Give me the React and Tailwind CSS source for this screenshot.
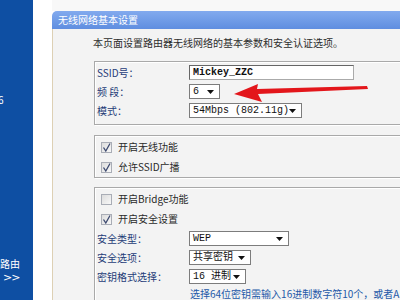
import React from "react";

const cjk = { fontFamily: '"Noto Sans CJK SC", "Liberation Sans", sans-serif' };
const mono = { fontFamily: '"Liberation Mono", "Noto Sans CJK SC", monospace' };

function Tri() {
  return (
    <svg width="7" height="4" viewBox="0 0 7 4" className="shrink-0">
      <path d="M0 0 L7 0 L3.5 4 Z" fill="#111" />
    </svg>
  );
}

function Select({ width, children }) {
  return (
    <div
      className="h-[15px] border border-[#7c7c7c] bg-white flex items-center justify-between pl-[3px] pr-[5px] text-[10px] leading-none text-[#111] shrink-0"
      style={{ ...mono, width }}
    >
      <span className="whitespace-nowrap">{children}</span>
      <Tri />
    </div>
  );
}

function Check({ checked, label }) {
  return (
    <div className="h-[20px] flex items-center pl-[6px]">
      <div className="w-[11px] h-[11px] border border-[#a9adb6] bg-gradient-to-br from-[#dcdcdc] to-[#f8f8f8] flex items-center justify-center shrink-0">
        {checked && (
          <svg width="9" height="9" viewBox="0 0 9 9">
            <path d="M1.5 4.5 L3.8 8 L8 0.5" fill="none" stroke="#3d4a70" strokeWidth="1.3" />
          </svg>
        )}
      </div>
      <span className="ml-[6px] text-[10px] leading-none text-[#2a2a2a] whitespace-nowrap" style={cjk}>
        {label}
      </span>
    </div>
  );
}

function Row({ label, children }) {
  return (
    <div className="h-[15px] flex items-center">
      <div className="w-[94px] pl-[2px] text-[10px] leading-none text-[#1f3c78] whitespace-nowrap shrink-0" style={cjk}>
        {label}
      </div>
      {children}
    </div>
  );
}

const box = "border border-[#a9a9a9] shadow-[1px_1px_0_#ffffff,inset_1px_1px_0_#ffffff]";

export default function App() {
  return (
    <div className="relative w-[400px] h-[300px] overflow-hidden flex bg-white" style={cjk}>
      <div className="w-[33px] shrink-0 bg-[#0e4fa3] flex flex-col text-white text-[10px] leading-[12px] overflow-hidden">
        <div className="pt-[94px] -ml-[2px]">6</div>
        <div className="mt-[152px] whitespace-nowrap">路由</div>
        <div className="mt-[2px] pl-[3px] text-[11px] tracking-[-1px]" style={{ fontFamily: '"DejaVu Sans", sans-serif' }}>
          &gt;&gt;
        </div>
      </div>
      <div className="w-[19px] shrink-0 bg-white" />
      <div className="w-[400px] shrink-0 flex flex-col overflow-hidden">
        <div className="h-[11px] shrink-0 bg-[#f8f8f8]" />
        <div className="h-[18px] shrink-0 rounded-tl-[5px] bg-gradient-to-b from-[#82aaee] to-[#5f8ee0] text-white text-[10px] leading-none pl-[6px] flex items-center whitespace-nowrap">
          无线网络基本设置
        </div>
        <div className="flex-1 min-h-0 overflow-hidden bg-[#f3f3f3] border-l border-[#ddd0b4] pl-[41px]">
          <div className="pt-[8px] -ml-[1px] text-[10px] leading-[12px] text-[#2d2d2d] whitespace-nowrap">
            本页面设置路由器无线网络的基本参数和安全认证选项。
          </div>

          <div className={`mt-[12px] ${box} pt-[3px] pb-[6px] flex flex-col gap-[4px]`}>
            <Row label="SSID号：">
              <div className="w-[165px] h-[15px] border border-[#666] border-b-[#aaa] border-r-[#aaa] bg-white flex items-center pl-[3px] text-[10px] font-bold text-[#111]" style={mono}>
                Mickey_ZZC
              </div>
            </Row>
            <Row label="频 段：">
              <Select width="31px">6</Select>
            </Row>
            <Row label="模式：">
              <Select width="113px">54Mbps (802.11g)</Select>
            </Row>
          </div>

          <div className={`mt-[10px] ${box} pt-[1px]`}>
            <Check checked label="开启无线功能" />
            <Check checked label="允许SSID广播" />
          </div>

          <div className={`mt-[9px] ${box} pt-[1px] h-[140px]`}>
            <Check label="开启Bridge功能" />
            <Check checked label="开启安全设置" />
            <div className="mt-[2px] flex flex-col gap-[4px]">
              <Row label="安全类型：">
                <Select width="100px">WEP</Select>
              </Row>
              <Row label="安全选项：">
                <Select width="62px">共享密钥</Select>
              </Row>
              <Row label="密钥格式选择：">
                <Select width="57px">16 进制</Select>
              </Row>
            </div>
            <div className="mt-[4px] pl-[95px] text-[10px] leading-[12px] text-[#2459a8] whitespace-nowrap">
              选择64位密钥需输入16进制数字符10个，或者ASCII码字符5个。
            </div>
          </div>
        </div>
      </div>

      <svg className="absolute left-0 top-0 pointer-events-none" width="400" height="300" viewBox="0 0 400 300">
        <polygon
          points="234,94 258,84 257,89 367,86 368,89 258,94 262,102"
          fill="#e3161b"
        />
      </svg>
    </div>
  );
}
